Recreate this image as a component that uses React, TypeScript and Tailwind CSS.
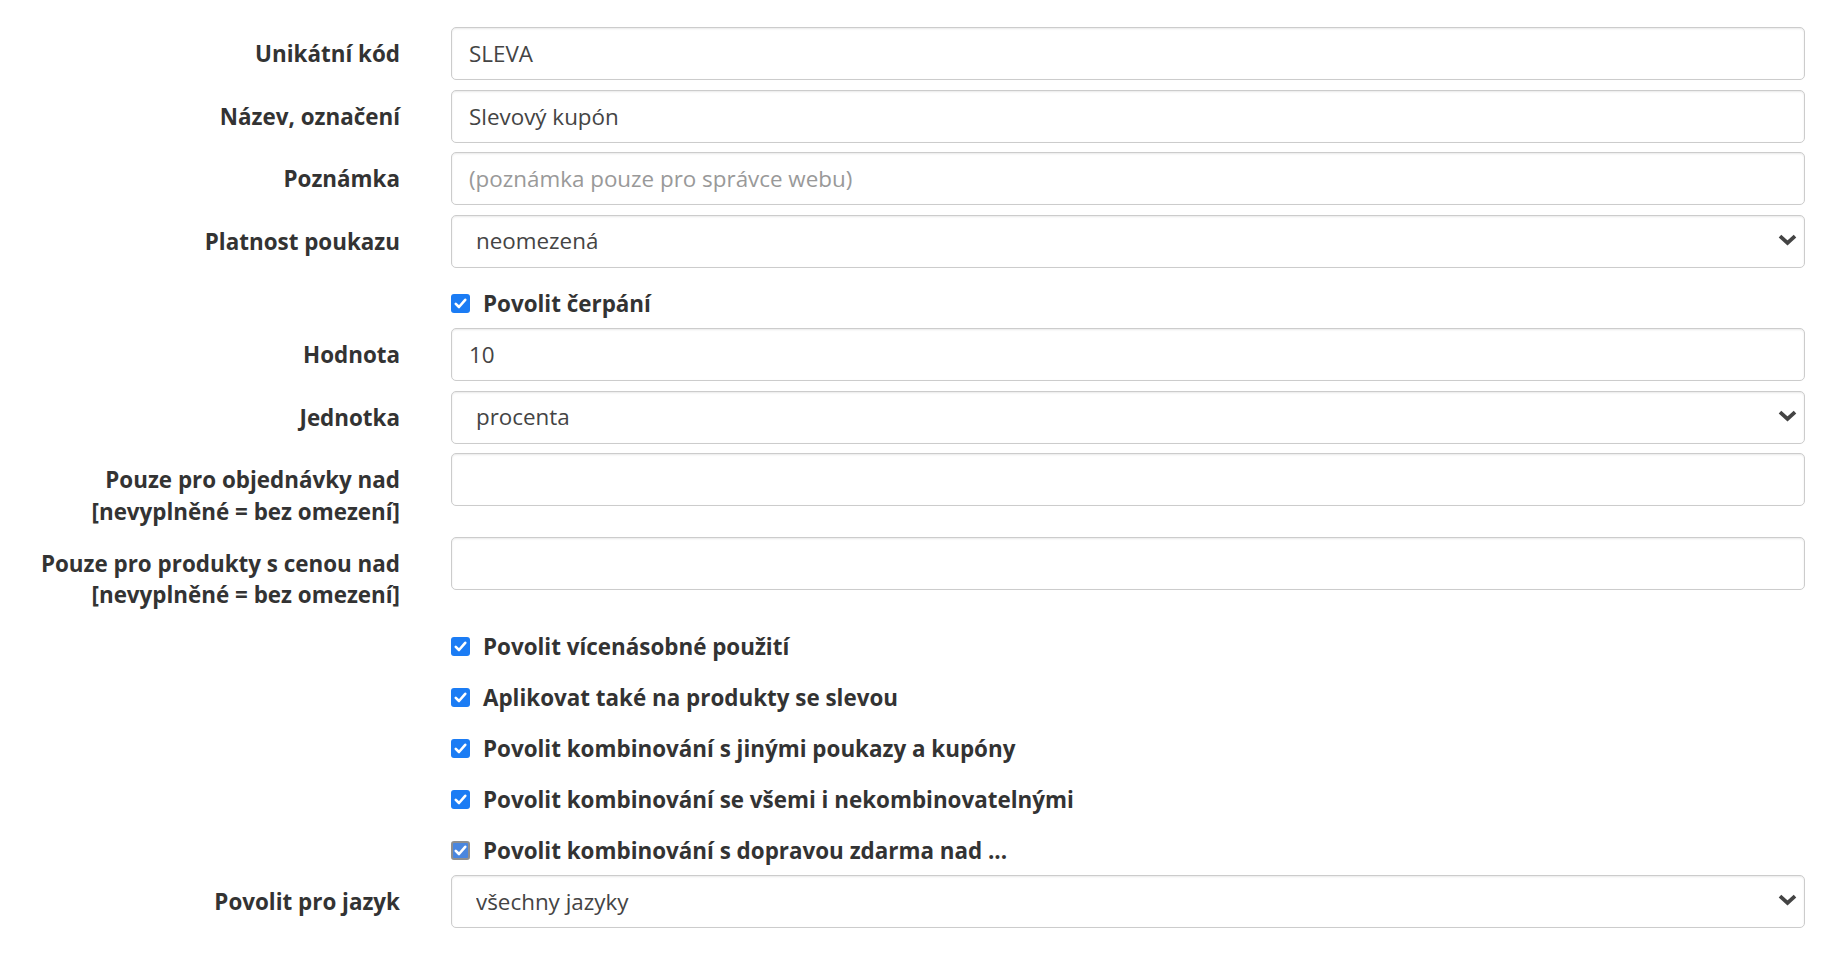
import { useState } from "react";

const labelCls =
  "w-[400px] shrink-0 text-right font-bold text-[22.4px] leading-[31.5px] text-[#333] pt-[11px]";
const fieldCls =
  "w-full h-[53px] rounded-[5px] border border-[#cccccc] bg-white shadow-[inset_0_1px_2px_rgba(0,0,0,0.09)] text-[22.4px] text-[#444] outline-none";

function TextRow({ label, value, placeholder }: { label: React.ReactNode; value?: string; placeholder?: string }) {
  return (
    <div className="flex gap-[51px]">
      <div className={labelCls}>{label}</div>
      <input
        className={`${fieldCls} px-[17px] placeholder:text-[#999]`}
        defaultValue={value}
        placeholder={placeholder}
      />
    </div>
  );
}

function SelectRow({ label, value }: { label: string; value: string }) {
  return (
    <div className="flex gap-[51px]">
      <div className={labelCls}>{label}</div>
      <div className="relative w-full">
        <select className={`${fieldCls} appearance-none pl-[24px] pr-[40px]`} defaultValue={value}>
          <option value={value}>{value}</option>
        </select>
        {/* chevron */}
        <svg
          className="pointer-events-none absolute right-[8px] top-[19px]"
          width="19"
          height="12"
          viewBox="0 0 19 12"
        >
          <polyline points="2,2.2 9.5,9 17,2.2" fill="none" stroke="#444" strokeWidth="3.8" strokeLinejoin="miter" />
        </svg>
      </div>
    </div>
  );
}

function CheckRow({ label, muted = false }: { label: string; muted?: boolean }) {
  const [on, setOn] = useState(true);
  return (
    <div className="flex gap-[51px] pt-[11px] -mb-[1px]">
      <div className="w-[400px] shrink-0" />
      <label className="flex items-center gap-[13px] cursor-pointer" onClick={() => setOn(!on)}>
        <span
          className={
            muted
              ? "flex items-center justify-center w-[19px] h-[19px] rounded-[3px] border-2 border-[#8f8f8f] bg-[#4a86de]"
              : "flex items-center justify-center w-[19px] h-[19px] rounded-[3px] bg-[#1b7cf4]"
          }
        >
          {on && (
            <svg width="13" height="11" viewBox="0 0 13 11">
              <polyline points="1.8,5.8 5,9 11.2,1.8" fill="none" stroke="white" strokeWidth="2.6" strokeLinecap="round" strokeLinejoin="round" />
            </svg>
          )}
        </span>
        <span className="font-bold text-[22.4px] leading-[31.5px] text-[#333]">{label}</span>
      </label>
    </div>
  );
}

export default function App() {
  return (
    <div
      className="min-h-screen bg-white pt-[27px] pr-[27px]"
      style={{ fontFamily: '"Open Sans", "Noto Sans", sans-serif' }}
    >
      <form className="flex flex-col gap-[9.5px]">
        <TextRow label="Unikátní kód" value="SLEVA" />
        <TextRow label="Název, označení" value="Slevový kupón" />
        <TextRow label="Poznámka" placeholder="(poznámka pouze pro správce webu)" />
        <SelectRow label="Platnost poukazu" value="neomezená" />
        <CheckRow label="Povolit čerpání" />
        <TextRow label="Hodnota" value="10" />
        <SelectRow label="Jednotka" value="procenta" />
        <TextRow
          label={
            <>
              Pouze pro objednávky nad
              <br />
              [nevyplněné = bez omezení]
            </>
          }
        />
        <TextRow
          label={
            <>
              Pouze pro produkty s cenou nad
              <br />
              [nevyplněné = bez omezení]
            </>
          }
        />
        <CheckRow label="Povolit vícenásobné použití" />
        <CheckRow label="Aplikovat také na produkty se slevou" />
        <CheckRow label="Povolit kombinování s jinými poukazy a kupóny" />
        <CheckRow label="Povolit kombinování se všemi i nekombinovatelnými" />
        <CheckRow label="Povolit kombinování s dopravou zdarma nad ..." muted />
        <SelectRow label="Povolit pro jazyk" value="všechny jazyky" />
      </form>
    </div>
  );
}
